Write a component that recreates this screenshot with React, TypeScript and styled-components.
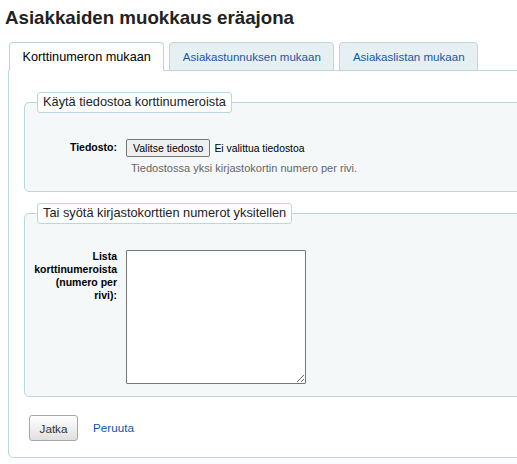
import React from "react";
import styled, { createGlobalStyle } from "styled-components";

const GlobalStyle = createGlobalStyle`
  html, body {
    margin: 0;
    padding: 0;
    background: #ffffff;
    overflow: hidden;
  }
  body {
    font-family: "Liberation Sans", Arial, sans-serif;
    font-size: 13px;
    color: #000;
  }
`;

const Page = styled.div`
  padding: 0 0 0 8px;
  width: 540px;
`;

const Title = styled.h1`
  margin: 0 0 0 -3px;
  padding-top: 6px;
  font-size: 18.72px;
  font-weight: bold;
  line-height: 24px;
  color: #222;
`;

const TabList = styled.div`
  display: flex;
  gap: 5px;
  margin: 12px 0 0 1px;
  position: relative;
  z-index: 1;
`;

const Tab = styled.div<{ $active?: boolean }>`
  height: 29px;
  box-sizing: border-box;
  padding: 0 12.5px;
  display: flex;
  align-items: center;
  font-size: ${(p) => (p.$active ? "12.7px" : "11.55px")};
  border: 1px solid #b9d8d9;
  border-bottom: ${(p) => (p.$active ? "1px solid #fff" : "1px solid #b9d8d9")};
  border-radius: 4px 4px 0 0;
  background: ${(p) => (p.$active ? "#ffffff" : "#e6f0f2")};
  color: ${(p) => (p.$active ? "#000" : "#1a57a6")};
  margin-bottom: -1px;
`;

const Panel = styled.div`
  border: 1px solid #b9d8d9;
  border-radius: 0 0 5px 5px;
  padding: 21px 15px 16px 15px;
  display: flex;
  flex-direction: column;
  gap: 11px;
`;

const Fieldset = styled.fieldset<{ $bottom: number }>`
  border: 1px solid #b9d8d9;
  border-radius: 5px;
  background: #f4f8f9;
  margin: 0;
  padding: 0 0 ${(p) => p.$bottom}px 0;
  min-width: 0;
`;

const Legend = styled.legend`
  margin-left: 12px;
  padding: 2px 5px 3px 5px;
  background: #ffffff;
  border: 1px solid #b9d8d9;
  border-radius: 3px;
  font-size: 12.8px;
  color: #222;
  line-height: 14px;
`;

const FormRow = styled.div<{ $top: number }>`
  display: grid;
  grid-template-columns: 93px auto;
  column-gap: 8px;
  align-items: start;
  margin-top: ${(p) => p.$top}px;
`;

const Label = styled.label<{ $pad: number }>`
  text-align: right;
  font-weight: bold;
  font-size: 10.5px;
  line-height: 13px;
  color: #000;
  padding: ${(p) => p.$pad}px 1px 0 7px;
`;

const Control = styled.div`
  display: flex;
  flex-direction: column;
`;

const FileLine = styled.div`
  display: flex;
  align-items: center;
  gap: 4px;
  font-size: 10.4px;
  height: 18px;
`;

const FileButton = styled.button`
  font-family: "Liberation Sans", Arial, sans-serif;
  font-size: 10.5px;
  height: 18px;
  padding: 0 6px;
  background: #efefef;
  border: 1px solid #767676;
  border-radius: 2px;
  color: #000;
  line-height: 16px;
`;

const Hint = styled.div`
  margin: 4px 0 0 5px;
  font-size: 11.05px;
  color: #666;
  line-height: 14px;
`;

const TextArea = styled.textarea`
  width: 180px;
  height: 134px;
  box-sizing: border-box;
  border: 1px solid #767676;
  border-radius: 1px;
  margin: 0;
  padding: 2px;
  background: #fff;
  display: block;
`;

const Actions = styled.div`
  display: flex;
  align-items: center;
  gap: 15px;
  margin-top: 7px;
  padding-left: 5px;
`;

const SubmitButton = styled.button`
  font-family: "Liberation Sans", Arial, sans-serif;
  font-size: 11.7px;
  width: 49px;
  height: 26px;
  border: 1px solid #a8a8a8;
  border-radius: 3px;
  background: linear-gradient(to bottom, #ffffff 0%, #e0e0e0 100%);
  color: #333;
  padding: 0;
`;

const CancelLink = styled.a`
  font-size: 11.7px;
  color: #0f57b0;
  text-decoration: none;
  margin-top: -2px;
`;

export default function App() {
  return (
    <>
      <GlobalStyle />
      <Page>
        <Title>Asiakkaiden muokkaus eräajona</Title>
        <TabList>
          <Tab $active>Korttinumeron mukaan</Tab>
          <Tab>Asiakastunnuksen mukaan</Tab>
          <Tab>Asiakaslistan mukaan</Tab>
        </TabList>
        <Panel>
          <Fieldset $bottom={16}>
            <Legend>Käytä tiedostoa korttinumeroista</Legend>
            <FormRow $top={26}>
              <Label $pad={2}>Tiedosto:</Label>
              <Control>
                <FileLine>
                  <FileButton type="button">Valitse tiedosto</FileButton>
                  <span>Ei valittua tiedostoa</span>
                </FileLine>
                <Hint>Tiedostossa yksi kirjastokortin numero per rivi.</Hint>
              </Control>
            </FormRow>
          </Fieldset>
          <Fieldset $bottom={12}>
            <Legend>Tai syötä kirjastokorttien numerot yksitellen</Legend>
            <FormRow $top={26}>
              <Label $pad={0}>Lista korttinumeroista (numero per rivi):</Label>
              <TextArea />
            </FormRow>
          </Fieldset>
          <Actions>
            <SubmitButton type="button">Jatka</SubmitButton>
            <CancelLink href="#">Peruuta</CancelLink>
          </Actions>
        </Panel>
      </Page>
    </>
  );
}
